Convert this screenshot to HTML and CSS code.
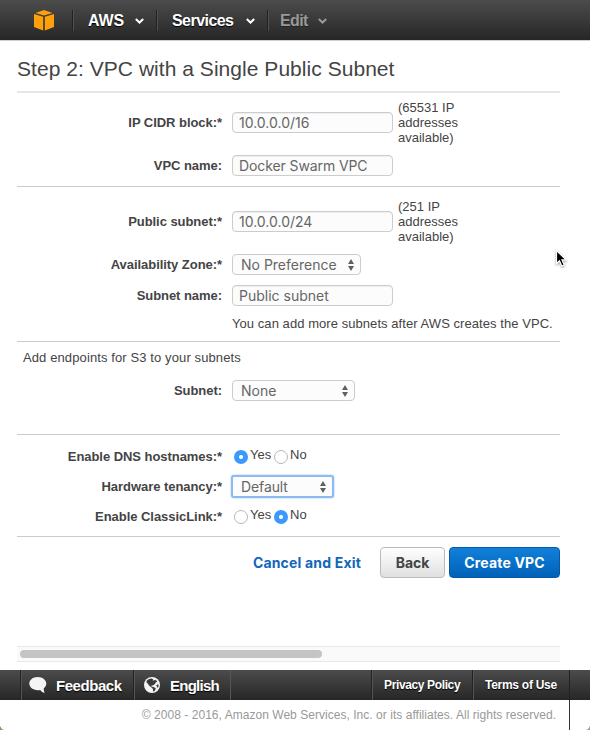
FILE: index.html
```html
<!DOCTYPE html>
<html lang="en">
<head>
<meta charset="utf-8">
<title>Create VPC</title>
<link rel="stylesheet" href="styles.css">
</head>
<body>
<header class="topbar">
  <a class="logo"><svg width="20" height="21" viewBox="0 0 20 21"><g fill="#ff9f0a"><path d="M10 0 18.500 2.900 10 5.600 1.500 2.900Z"/><path d="M0 4 9.200 6.800V20.500L0 17Z"/><path d="M20 4 10.800 6.800V20.500L20 17Z"/></g></svg></a>
  <a class="nav nav-aws"><span class="t-aws">AWS</span><svg class="chev" width="9" height="6" viewBox="0 0 9 6"><path d="M.8 1 4.500 4.500 8.200 1"/></svg></a>
  <a class="nav nav-services"><span class="t-services">Services</span><svg class="chev" width="9" height="6" viewBox="0 0 9 6"><path d="M.8 1 4.500 4.500 8.200 1"/></svg></a>
  <a class="nav nav-edit"><span class="t-edit">Edit</span><svg class="chev" width="9" height="6" viewBox="0 0 9 6"><path d="M.8 1 4.500 4.500 8.200 1"/></svg></a>
</header>
<main class="content">
  <h1><span class="t-title">Step 2: VPC with a Single Public Subnet</span></h1>
  <section class="network">
    <div class="row tall"><label>IP CIDR block:*</label><div class="field"><span class="input"><span class="t-cidr">10.0.0.0/16</span></span><span class="hint">(65531 IP<br>addresses<br>available)</span></div></div>
    <div class="row"><label>VPC name:</label><div class="field"><span class="input"><span class="t-vpc">Docker Swarm VPC</span></span></div></div>
  </section>
  <section class="subnet">
    <div class="row tall"><label>Public subnet:*</label><div class="field"><span class="input"><span class="t-pub">10.0.0.0/24</span></span><span class="hint">(251 IP<br>addresses<br>available)</span></div></div>
    <div class="row"><label>Availability Zone:*</label><div class="field"><span class="select zone"><span class="t-zone">No Preference</span><svg class="arrows" width="8" height="14" viewBox="0 0 8 14"><path d="M1 6 4 1 7 6ZM1 8 4 13 7 8Z"/></svg></span></div></div>
    <div class="row"><label>Subnet name:</label><div class="field"><span class="input"><span class="t-sname">Public subnet</span></span></div></div>
    <p class="note"><span class="t-note">You can add more subnets after AWS creates the VPC.</span></p>
  </section>
  <section class="endpoints">
    <p><span class="t-endp">Add endpoints for S3 to your subnets</span></p>
    <div class="row"><label>Subnet:</label><div class="field"><span class="select endpoint"><span>None</span><svg class="arrows" width="8" height="14" viewBox="0 0 8 14"><path d="M1 6 4 1 7 6ZM1 8 4 13 7 8Z"/></svg></span></div></div>
  </section>
  <section class="options">
    <div class="row"><label>Enable DNS hostnames:*</label><div class="field radios"><i class="radio on"></i><span class="yes">Yes</span><i class="radio"></i><span>No</span></div></div>
    <div class="row"><label>Hardware tenancy:*</label><div class="field"><span class="select tenancy"><span class="t-def">Default</span><svg class="arrows" width="8" height="14" viewBox="0 0 8 14"><path d="M1 6 4 1 7 6ZM1 8 4 13 7 8Z"/></svg></span></div></div>
    <div class="row"><label>Enable ClassicLink:*</label><div class="field radios"><i class="radio"></i><span class="yes">Yes</span><i class="radio on"></i><span>No</span></div></div>
  </section>
  <div class="actions"><a class="cancel"><span class="t-cancel">Cancel and Exit</span></a><a class="btn back"><span class="t-back">Back</span></a><a class="btn create"><span class="t-create">Create VPC</span></a></div>
  <div class="track"><div class="thumb"></div></div>
</main>
<footer>
  <div class="bar">
    <a class="feedback"><svg width="18" height="16" viewBox="0 0 18 16"><path fill="#f4f4f4" d="M8.700 0C3.900 0 .3 2.900.3 6.600s3.600 6.600 8.400 6.600c.9 0 1.700 0 2.500-.3 1 1.500 2.600 2.700 4.700 2.900-.8-1-1.300-2.500-1.100-4.500 1.600-1.200 2.500-2.800 2.500-4.700C17.300 2.900 13.500 0 8.700 0Z"/></svg><span class="t-feedback">Feedback</span></a>
    <a class="english"><svg width="16" height="16" viewBox="0 0 16 16"><circle cx="8" cy="8" r="8" fill="#f4f4f4"/><path fill="#3a3a3a" d="M2.600 3.800 5 1.900 7.600 1.400 9.300 2.300 8.500 3.300 10.100 3.500 11 2.700 12.700 3.700 13.300 5.300 11.900 5 11.200 6.700 9 8.500 7.700 8.200 7.400 9.400 9.300 10 11.700 11 11.500 12.500 9.900 14.700 9.100 13.900 8.800 11.700 7.200 10.200 5 8.400 3.800 6.400 2.600 5.700ZM12.300 8 14.500 7.300 14.400 10.300 13.100 10.600Z"/></svg><span class="t-english">English</span></a>
    <a class="privacy"><span class="t-privacy">Privacy Policy</span></a>
    <a class="terms"><span class="t-terms">Terms of Use</span></a>
    <i class="end"></i>
  </div>
  <div class="legal"><span class="t-legal">© 2008 - 2016, Amazon Web Services, Inc. or its affiliates. All rights reserved.</span></div>
</footer>
<svg class="cursor" width="14" height="20" viewBox="0 0 14 20"><path d="M1.500 1.500V14.500L4.500 11.700 6.700 17 9.200 16 7 10.900H11.100Z" fill="#000" stroke="#fff" stroke-width="1.200"/></svg>
<svg class="corner left" width="4" height="4" viewBox="0 0 4 4"><path d="M0 0Q1 3 4 4H0Z" fill="#9a8a68"/></svg>
<svg class="corner right" width="4" height="4" viewBox="0 0 4 4"><path d="M4 0Q3 3 0 4H4Z" fill="#a39a9c"/></svg>
</body>
</html>
```
FILE: styles.css
```css
* { box-sizing: border-box; }
body { margin: 0; height: 730px; overflow: hidden; background: #fff; color: #444; font: 13px/15px "Liberation Sans", Arial, sans-serif; }
span { white-space: nowrap; }
h1, p { margin: 0; font-weight: normal; }
svg { display: block; flex: none; }

.topbar { height: 41px; display: flex; align-items: center; background: linear-gradient(#4c4c4c, #262626); border-bottom: 1px solid #d0d0c8; color: #fff; font-size: 16px; font-weight: bold; text-shadow: 0 1px 1px #000; }
.logo { width: 72px; padding-left: 34px; }
.nav { height: 21px; display: flex; align-items: center; justify-content: space-between; border-left: 1px solid #222; box-shadow: inset 1px 0 #505050; padding-left: 15px; }
.nav-aws { width: 84px; padding-right: 12px; }
.nav-services { width: 111px; padding-right: 12px; }
.nav-edit { width: 72px; padding: 0 12px 0 12px; color: #999; text-shadow: 0 1px 1px #222; }
.chev { fill: none; stroke: currentColor; stroke-width: 2; margin-top: 2px; }
.t-aws { letter-spacing: -.1px; }
.t-services { letter-spacing: -.55px; }
.t-edit { letter-spacing: -.65px; }

.content { height: 629px; padding-left: 17px; width: 560px; }
h1 { height: 52px; border-bottom: 2px solid #e6e6e6; font-size: 21px; line-height: 55px; letter-spacing: .04px; }
section { border-bottom: 1px solid #ccc; display: grid; }
.network { padding: 7px 0 10px; row-gap: 10px; }
.subnet { padding: 12px 0 10px; row-gap: 10px; }
.endpoints { padding: 8px 0 33px; row-gap: 15px; }
.endpoints p { padding-left: 6px; letter-spacing: .11px; }
.options { padding: 11px 0 9px; row-gap: 9px; }
.row { display: grid; grid-template-columns: 205px 1fr; column-gap: 10px; height: 21px; align-items: center; }
.row.tall { height: 45px; }
label { text-align: right; font-weight: bold; letter-spacing: -.05px; }
.field { display: flex; align-items: center; }
.input, .select { height: 21px; border: 1px solid #ccc; border-radius: 4px; background: #fcfcfc; font: 14px/21px Inter, sans-serif; color: #666; display: flex; align-items: center; }
.input { width: 161px; padding-left: 6px; box-shadow: inset 0 1px 1px #eee; }
.t-vpc { letter-spacing: -.1px; }
.select { justify-content: space-between; padding: 0 5px 0 8px; }
.zone { width: 129px; }
.endpoint { width: 123px; }
.tenancy { width: 101px; border-color: #8abaf0; border-radius: 2px; box-shadow: 0 0 0 1px #8dbcf2, 0 0 2px 1px #8dbcf2; }
.t-def { letter-spacing: -.1px; }
.arrows { fill: #606060; }
.hint { margin-left: 5px; }
.note { padding-left: 215px; letter-spacing: .06px; }
.radios { padding-left: 2px; }
.radios span { margin: -5px 0 0 2px; }
.radios .yes { width: 22px; margin-right: 2px; }
.radio { width: 14px; height: 14px; flex: none; border: 1px solid #b8b8b8; border-radius: 50%; background: #fff; margin-top: 1px; }
.radio.on { border: 0; background: radial-gradient(circle, #fff 0 1.500px, #3b99fc 2.500px); }

.actions { display: flex; align-items: center; padding-top: 10px; font: bold 14px/31px Inter, sans-serif; justify-content: flex-end; }
.cancel { color: #1166bb; margin-right: 19px; letter-spacing: .18px; }
.btn { height: 31px; line-height: 29px; border: 1px solid #bbb; border-radius: 4px; display: flex; justify-content: center; }
.back { width: 65px; margin-right: 4px; background: linear-gradient(#fff, #e0e0e0); }
.create { width: 111px; color: #fff; border-color: #0759a8; background: linear-gradient(#1280d9, #0061b8); letter-spacing: .18px; }
.track { margin-top: 68px; height: 16px; padding: 3px; background: #fafafa; border: solid #e8e8e8; border-width: 1px 0; }
.thumb { width: 302px; height: 8px; border-radius: 4px; background: #c4c4c4; }

.bar { height: 30px; display: flex; background: linear-gradient(#4c4c4c, #262626); color: #fff; padding-left: 20px; font-weight: bold; text-shadow: 0 1px 1px #000; }
.bar a, .end { display: flex; align-items: center; border-left: 1px solid #222; box-shadow: inset 1px 0 #555; }
.feedback { width: 113px; padding-left: 8px; gap: 9px; font-size: 15px; letter-spacing: -.45px; }
.bar .english { width: 98px; padding-left: 10px; gap: 10px; font-size: 15px; letter-spacing: -.75px; border-right: 1px solid #555; }
.privacy { margin-left: 140px; width: 101px; padding-left: 12px; letter-spacing: -.37px; }
.terms { width: 97px; padding-left: 12px; letter-spacing: -.27px; }
.bar .privacy, .bar .terms { font-size: 12px; }
.legal { height: 30px; width: 570px; border-right: 1px solid #333; line-height: 30px; padding-right: 13px; text-align: right; font-size: 12px; letter-spacing: .036px; color: #999; }
.cursor { position: absolute; left: 555px; top: 249px; filter: drop-shadow(0 1px 1px #0006); }
.corner { position: absolute; bottom: 0; }
.left { left: 0; }
.right { right: 0; }
```
